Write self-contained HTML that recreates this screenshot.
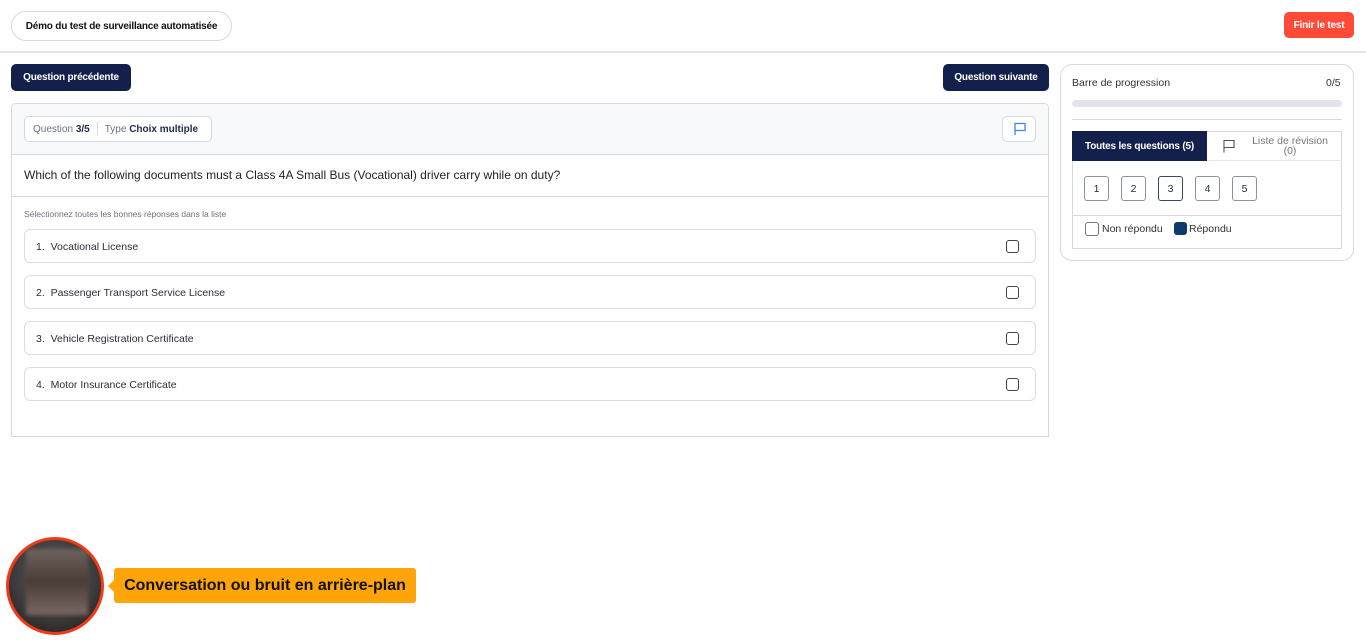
<!DOCTYPE html><html><head><meta charset="utf-8"><style>
*{box-sizing:border-box;margin:0;padding:0}
body{width:1366px;height:641px;background:#fff;font-family:"Liberation Sans",sans-serif;position:relative;overflow:hidden;color:#1f2937}
.a{position:absolute;white-space:nowrap}
.btn{background:#13204b;color:#fff;font-weight:bold;font-size:10px;letter-spacing:-0.2px;border-radius:5px;display:flex;align-items:center;justify-content:center}
.opt{position:absolute;left:24px;width:1012px;height:34px;border:1px solid #d9dde3;border-radius:6px;font-size:10.5px;color:#2a2f3a;padding:11px 0 0 11px}
.opt i{position:absolute;left:981px;top:10px;width:13px;height:13px;border:1.3px solid #444;border-radius:3px}
.nb{position:absolute;top:176px;width:25px;height:25px;border:1px solid #8a93a3;border-radius:3px;font-size:10.5px;display:flex;align-items:center;justify-content:center}
</style></head><body>
<div class="a" style="left:11px;top:11px;width:221px;height:30px;border:1px solid #d5d9df;border-radius:15px;font-size:10px;letter-spacing:-0.2px;font-weight:bold;color:#111;display:flex;align-items:center;justify-content:center">Démo du test de surveillance automatisée</div>
<div class="a" style="left:1284px;top:12px;width:70px;height:26px;background:#ff4a38;color:#fff;border-radius:5px;font-size:10px;letter-spacing:-0.2px;font-weight:bold;display:flex;align-items:center;justify-content:center">Finir le test</div>
<div class="a" style="left:0;top:51px;width:1366px;height:2px;background:#e2e6eb"></div>
<div class="a btn" style="left:11px;top:64px;width:120px;height:27px">Question précédente</div>
<div class="a btn" style="left:943px;top:64px;width:106px;height:27px">Question suivante</div>
<div class="a" style="left:11px;top:103px;width:1038px;height:334px;border:1px solid #d5d9df;border-radius:5px 5px 0 0;overflow:hidden">
<div class="a" style="left:0;top:0;width:1036px;height:51px;background:#f8f9fb;border-bottom:1px solid #d5d9df"></div>
<div class="a" style="left:0;top:92px;width:1036px;height:1px;background:#d5d9df"></div>
</div>
<div class="a" style="left:24px;top:116px;width:188px;height:26px;border:1px solid #d5d9df;border-radius:5px;background:#fff;font-size:10px;color:#6b7280;display:flex;align-items:center;padding-left:8px">Question&nbsp;<b style="color:#1f2a4d">3/5</b><span style="display:inline-block;width:1px;height:14px;background:#d5d9df;margin:0 7px"></span>Type&nbsp;<b style="color:#1f2a4d">Choix multiple</b></div>
<div class="a" style="left:1002px;top:116px;width:34px;height:26px;border:1px solid #d5d9df;border-radius:5px;background:#fff"><svg class="a" style="left:10px;top:5px" width="14" height="14" viewBox="0 0 14 14" fill="none" stroke="#3b82f6" stroke-width="1.3"><path d="M2 13V1.5h10v7H2"/></svg></div>
<div class="a" style="left:24px;top:168px;font-size:12px;color:#222">Which of the following documents must a Class 4A Small Bus (Vocational) driver carry while on duty?</div>
<div class="a" style="left:24px;top:209px;font-size:8.5px;color:#6b7280">Sélectionnez toutes les bonnes réponses dans la liste</div>
<div class="opt" style="top:229px">1.&nbsp; Vocational License<i></i></div>
<div class="opt" style="top:275px">2.&nbsp; Passenger Transport Service License<i></i></div>
<div class="opt" style="top:321px">3.&nbsp; Vehicle Registration Certificate<i></i></div>
<div class="opt" style="top:367px">4.&nbsp; Motor Insurance Certificate<i></i></div>
<div class="a" style="left:1060px;top:64px;width:294px;height:197px;border:1px solid #d5d9df;border-radius:12px"></div>
<div class="a" style="left:1072px;top:77px;font-size:10.5px;color:#333">Barre de progression</div>
<div class="a" style="left:1326px;top:77px;font-size:10.5px;color:#333">0/5</div>
<div class="a" style="left:1072px;top:100px;width:270px;height:7px;background:#e3e5e9;border-radius:4px"></div>
<div class="a" style="left:1072px;top:119px;width:270px;height:1px;background:#d5d9df"></div>
<div class="a" style="left:1072px;top:131px;width:270px;height:118px;border:1px solid #d5d9df"></div>
<div class="a btn" style="left:1072px;top:131px;width:135px;height:30px;border-radius:0;font-size:10px">Toutes les questions (5)</div>
<div class="a" style="left:1207px;top:160px;width:135px;height:1px;background:#e5e7eb"></div>
<svg class="a" style="left:1222px;top:139px" width="14" height="14" viewBox="0 0 14 14" fill="none" stroke="#555" stroke-width="1.1"><path d="M2 13.5V1.5h10v7H2"/></svg>
<div class="a" style="left:1240px;top:136px;width:100px;text-align:center;font-size:10.5px;line-height:10px;color:#777">Liste de révision<br>(0)</div>
<div class="a" style="left:1072px;top:215px;width:270px;height:1px;background:#d5d9df"></div>
<div class="nb" style="left:1084px">1</div><div class="nb" style="left:1121px">2</div><div class="nb" style="left:1158px;border-color:#3b4a6b">3</div><div class="nb" style="left:1195px">4</div><div class="nb" style="left:1232px">5</div>
<div class="a" style="left:1085px;top:222px;width:14px;height:14px;border:1px solid #777;border-radius:3px"></div>
<div class="a" style="left:1102px;top:223px;font-size:10.5px;color:#333">Non répondu</div>
<div class="a" style="left:1174px;top:222px;width:13px;height:13px;background:#0f3a6e;border-radius:3px"></div>
<div class="a" style="left:1189px;top:223px;font-size:10.5px;color:#333">Répondu</div>
<div class="a" style="left:6px;top:537px;width:98px;height:98px;border-radius:50%;border:3px solid #f03a17;background:radial-gradient(circle at 50% 40%,#6a6466,#3a3838 60%,#1a1a18);overflow:hidden">
<div class="a" style="left:17px;top:9px;width:62px;height:66px;background:linear-gradient(#6e625f,#4a3d36 50%,#7a6762);filter:blur(2px)"></div></div>
<div class="a" style="left:108px;top:580px;width:0;height:0;border:6px solid transparent;border-right-color:#ffa50a;border-left:0"></div>
<div class="a" style="left:114px;top:568px;width:302px;height:35px;background:#ffa50a;border-radius:3px;color:#111;font-weight:bold;font-size:16px;display:flex;align-items:center;justify-content:center">Conversation ou bruit en arrière-plan</div>
</body></html>
